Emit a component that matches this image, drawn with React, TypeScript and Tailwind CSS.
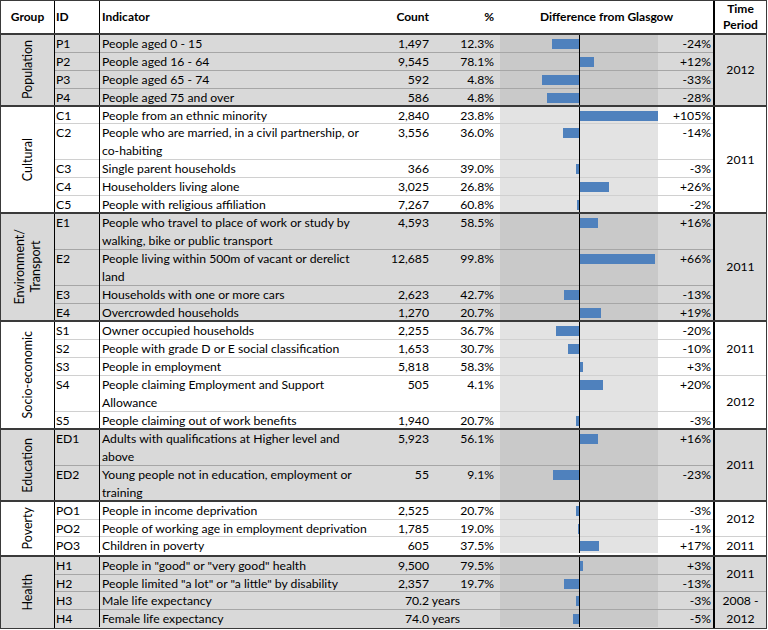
type Row = {
  id: string
  text: string[]
  count: string
  pct: string
  diff: number
  years?: boolean
  short?: boolean
}

type Time = { lines: string[]; cls: string }

type Section = {
  group: string[]
  shaded: boolean
  rows: Row[]
  time: Time[]
}

const sections: Section[] = [
  {
    group: ['Population'],
    shaded: true,
    rows: [
      { id: 'P1', text: ['People aged 0 - 15'], count: '1,497', pct: '12.3%', diff: -24 },
      { id: 'P2', text: ['People aged 16 - 64'], count: '9,545', pct: '78.1%', diff: 12 },
      { id: 'P3', text: ['People aged 65 - 74'], count: '592', pct: '4.8%', diff: -33 },
      { id: 'P4', text: ['People aged 75 and over'], count: '586', pct: '4.8%', diff: -28 },
    ],
    time: [{ lines: ['2012'], cls: 'flex-1' }],
  },
  {
    group: ['Cultural'],
    shaded: false,
    rows: [
      { id: 'C1', text: ['People from an ethnic minority'], count: '2,840', pct: '23.8%', diff: 105, short: true },
      {
        id: 'C2',
        text: ['People who are married, in a civil partnership, or', 'co-habiting'],
        count: '3,556',
        pct: '36.0%',
        diff: -14,
      },
      { id: 'C3', text: ['Single parent households'], count: '366', pct: '39.0%', diff: -3 },
      { id: 'C4', text: ['Householders living alone'], count: '3,025', pct: '26.8%', diff: 26 },
      { id: 'C5', text: ['People with religious affiliation'], count: '7,267', pct: '60.8%', diff: -2 },
    ],
    time: [{ lines: ['2011'], cls: 'flex-1' }],
  },
  {
    group: ['Environment/', 'Transport'],
    shaded: true,
    rows: [
      {
        id: 'E1',
        text: ['People who travel to place of work or study by', 'walking, bike or public transport'],
        count: '4,593',
        pct: '58.5%',
        diff: 16,
      },
      {
        id: 'E2',
        text: ['People living within 500m of vacant or derelict', 'land'],
        count: '12,685',
        pct: '99.8%',
        diff: 66,
      },
      { id: 'E3', text: ['Households with one or more cars'], count: '2,623', pct: '42.7%', diff: -13 },
      { id: 'E4', text: ['Overcrowded households'], count: '1,270', pct: '20.7%', diff: 19 },
    ],
    time: [{ lines: ['2011'], cls: 'flex-1' }],
  },
  {
    group: ['Socio-economic'],
    shaded: false,
    rows: [
      { id: 'S1', text: ['Owner occupied households'], count: '2,255', pct: '36.7%', diff: -20 },
      {
        id: 'S2',
        text: ['People with grade D or E social classification'],
        count: '1,653',
        pct: '30.7%',
        diff: -10,
      },
      { id: 'S3', text: ['People in employment'], count: '5,818', pct: '58.3%', diff: 3 },
      {
        id: 'S4',
        text: ['People claiming Employment and Support', 'Allowance'],
        count: '505',
        pct: '4.1%',
        diff: 20,
      },
      { id: 'S5', text: ['People claiming out of work benefits'], count: '1,940', pct: '20.7%', diff: -3 },
    ],
    time: [
      { lines: ['2011'], cls: 'h-[54px]' },
      { lines: ['2012'], cls: 'flex-1' },
    ],
  },
  {
    group: ['Education'],
    shaded: true,
    rows: [
      {
        id: 'ED1',
        text: ['Adults with qualifications at Higher level and', 'above'],
        count: '5,923',
        pct: '56.1%',
        diff: 16,
      },
      {
        id: 'ED2',
        text: ['Young people not in education, employment or', 'training'],
        count: '55',
        pct: '9.1%',
        diff: -23,
      },
    ],
    time: [{ lines: ['2011'], cls: 'flex-1' }],
  },
  {
    group: ['Poverty'],
    shaded: false,
    rows: [
      { id: 'PO1', text: ['People in income deprivation'], count: '2,525', pct: '20.7%', diff: -3 },
      {
        id: 'PO2',
        text: ['People of working age in employment deprivation'],
        count: '1,785',
        pct: '19.0%',
        diff: -1,
        short: true,
      },
      { id: 'PO3', text: ['Children in poverty'], count: '605', pct: '37.5%', diff: 17 },
    ],
    time: [
      { lines: ['2012'], cls: 'h-[35px]' },
      { lines: ['2011'], cls: 'flex-1' },
    ],
  },
  {
    group: ['Health'],
    shaded: true,
    rows: [
      { id: 'H1', text: ['People in "good" or "very good" health'], count: '9,500', pct: '79.5%', diff: 3 },
      {
        id: 'H2',
        text: ['People limited "a lot" or "a little" by disability'],
        count: '2,357',
        pct: '19.7%',
        diff: -13,
        short: true,
      },
      { id: 'H3', text: ['Male life expectancy'], count: '70.2', pct: '', diff: -3, years: true },
      { id: 'H4', text: ['Female life expectancy'], count: '74.0', pct: '', diff: -5, years: true, short: true },
    ],
    time: [
      { lines: ['2011'], cls: 'h-[35px]' },
      { lines: ['2008 -', '2012'], cls: 'flex-1' },
    ],
  },
]

const shadedTheme = {
  bg: 'bg-[#d9d9d9]',
  band: 'bg-[#c9c9c9]',
  line: 'border-b border-[#a6a6a6]',
}

const whiteTheme = {
  bg: 'bg-white',
  band: 'bg-[#e3e3e3]',
  line: 'border-b border-[#d0d0d0]',
}

// px per percentage point, bars clipped at the edge of the band
const barWidth = (d: number, max: number) => Math.min(Math.round(Math.abs(d) * 1.13), max)

const rowHeight = (row: Row, last: boolean, lastSection: boolean) => {
  if (row.text.length > 1) return last && !lastSection ? 'h-[34px]' : 'h-[36px]'
  if (last && !lastSection) return row.short ? 'h-[15px]' : 'h-[16px]'
  return row.short ? 'h-[17px]' : 'h-[18px]'
}

const IndicatorRow = ({ row, theme, last, lastSection }: {
  row: Row
  theme: typeof shadedTheme
  last: boolean
  lastSection: boolean
}) => {
  const b = last ? '' : theme.line

  return (
    <div className={`flex ${rowHeight(row, last, lastSection)} leading-[18px]`}>
      <div className={`w-[44px] shrink-0 pl-[1px] ${b}`}>{row.id}</div>
      <div className="w-px shrink-0 bg-black" />
      <div className={`w-[265px] shrink-0 pl-[2px] whitespace-nowrap ${b}`}>
        {row.text.map((t) => (
          <div key={t}>{t}</div>
        ))}
      </div>
      {row.years ? (
        <div className={`w-[135px] shrink-0 text-center ${b}`}>{row.count} years</div>
      ) : (
        <>
          <div className={`w-[70px] shrink-0 text-right pr-[6px] ${b}`}>{row.count}</div>
          <div className={`w-[65px] shrink-0 text-right pr-[6px] ${b}`}>{row.pct}</div>
        </>
      )}
      <div className={`w-[79px] shrink-0 flex justify-end items-start pt-[4px] ${theme.band} ${b}`}>
        {row.diff < 0 && (
          <div className="h-[10px] bg-[#4f81bd]" style={{ width: barWidth(row.diff, 79) }} />
        )}
      </div>
      <div className="w-px shrink-0 bg-black" />
      <div className={`w-[78px] shrink-0 flex justify-start items-start pt-[4px] ${theme.band} ${b}`}>
        {row.diff > 0 && (
          <div className="h-[10px] bg-[#4f81bd]" style={{ width: barWidth(row.diff, 78) }} />
        )}
      </div>
      <div className={`flex-1 text-right pr-[2px] ${b}`}>
        {row.diff > 0 ? `+${row.diff}%` : `${row.diff}%`}
      </div>
    </div>
  )
}

const SectionBlock = ({ s, lastSection }: { s: Section; lastSection: boolean }) => {
  const theme = s.shaded ? shadedTheme : whiteTheme
  return (
    <div className={`flex ${theme.bg} ${lastSection ? '' : 'border-b-2 border-[#3a3a3a]'}`}>
      <div className="w-[54px] shrink-0 border-r border-black flex items-center justify-center">
        <div className="[writing-mode:vertical-rl] rotate-180 text-center text-[12.5px] leading-[16px]">
          {s.group.map((g) => (
            <div key={g}>{g}</div>
          ))}
        </div>
      </div>
      <div className="flex-1 flex flex-col">
        {s.rows.map((r, i) => (
          <IndicatorRow
            key={r.id}
            row={r}
            theme={theme}
            last={i === s.rows.length - 1}
            lastSection={lastSection}
          />
        ))}
      </div>
      <div className="w-[53px] shrink-0 border-l-2 border-black flex flex-col">
        {s.time.map((t, i) => (
          <div
            key={i}
            className={`${t.cls} flex flex-col items-center justify-center leading-[18px] ${
              i < s.time.length - 1 ? theme.line : ''
            }`}
          >
            {t.lines.map((l) => (
              <div key={l}>{l}</div>
            ))}
          </div>
        ))}
      </div>
    </div>
  )
}

const App = () => {
  return (
    <div className="w-[767px] border border-[#3a3a3a] bg-white text-black text-[12.2px] [font-family:Lato,sans-serif]">
      <div className="flex h-[34px] border-b-2 border-[#3a3a3a] font-bold text-[12px]">
        <div className="w-[54px] shrink-0 border-r border-black flex items-center justify-center">Group</div>
        <div className="w-[44px] shrink-0 pl-[1px] flex items-center">ID</div>
        <div className="w-px shrink-0 bg-black" />
        <div className="w-[265px] shrink-0 pl-[2px] flex items-center">Indicator</div>
        <div className="w-[70px] shrink-0 pr-[6px] flex items-center justify-end">Count</div>
        <div className="w-[65px] shrink-0 pr-[6px] flex items-center justify-end">%</div>
        <div className="flex-1 flex items-center justify-center">Difference from Glasgow</div>
        <div className="w-[53px] shrink-0 border-l-2 border-black flex flex-col items-center justify-center leading-[16px]">
          <div>Time</div>
          <div>Period</div>
        </div>
      </div>
      {sections.map((s, i) => (
        <SectionBlock key={s.group[0]} s={s} lastSection={i === sections.length - 1} />
      ))}
    </div>
  )
}

export default App
